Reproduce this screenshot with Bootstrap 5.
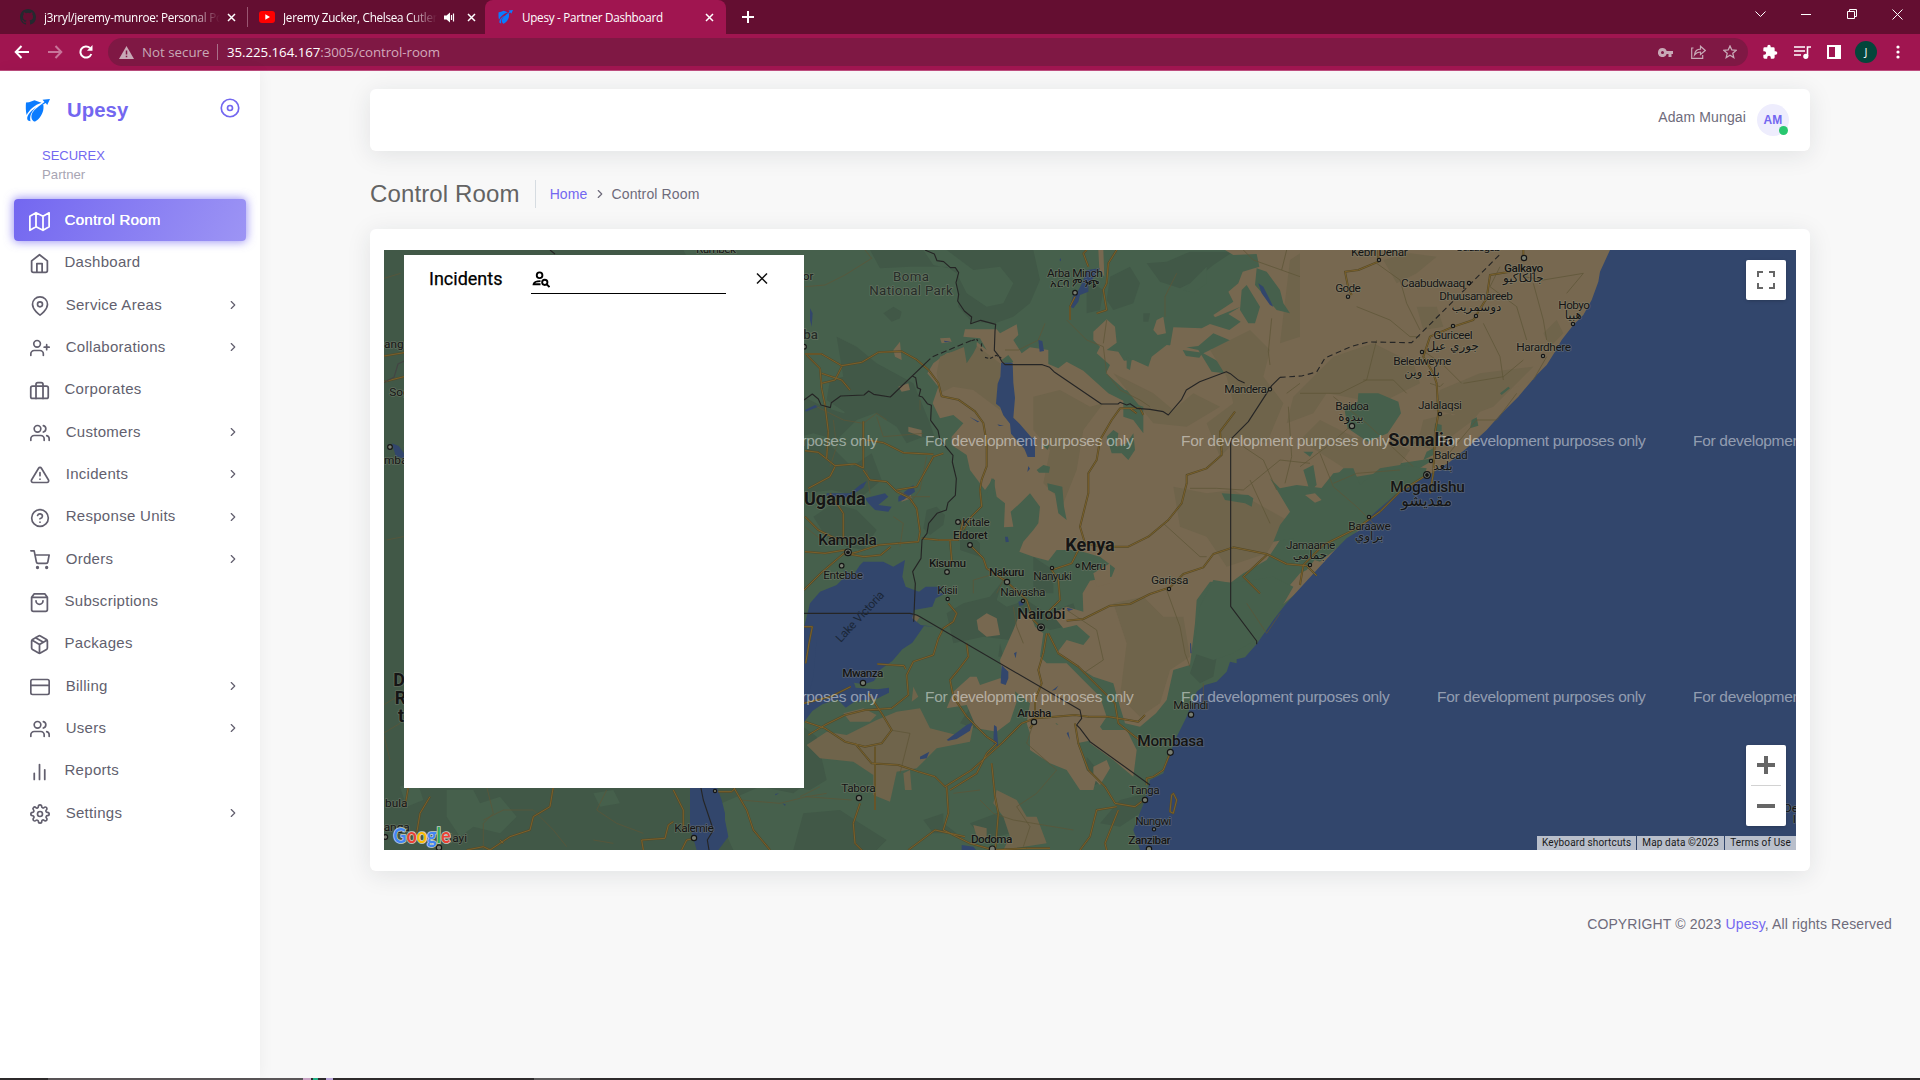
<!DOCTYPE html>
<html lang="en">
<head>
<meta charset="utf-8">
<title>Upesy - Partner Dashboard</title>
<link href="https://cdn.jsdelivr.net/npm/bootstrap@5.3.0/dist/css/bootstrap.min.css" rel="stylesheet">
<script src="https://cdn.jsdelivr.net/npm/bootstrap@5.3.0/dist/js/bootstrap.bundle.min.js"></script>
<style>
  body{font-family:"Liberation Sans",Arial,sans-serif;font-size:14px;letter-spacing:.13px;color:#6e6b7b;background:#f8f8f8;height:1080px;overflow:hidden;line-height:20px}
  a{color:#7367f0;text-decoration:none}
  svg{display:block;flex:none;letter-spacing:0}
  .ic{fill:none;stroke:currentColor;stroke-width:2;stroke-linecap:round;stroke-linejoin:round}
  /* browser chrome */
  .win-frame{font-family:"Open Sans","Noto Sans",sans-serif;color:#fff;letter-spacing:0}
  .tab-strip{height:34px;background:#640e31;font-size:11.7px;letter-spacing:-.28px}
  .tab-item{height:34px}
  .tab-one{width:247px;padding-left:20px}
  .tab-two{width:238px;padding-left:11px;border-left:1px solid #9a5672;height:20px}
  .tab-active{width:241px;background:#a01550;border-radius:8px 8px 0 0;padding-left:13px}
  .tab-title{overflow:hidden;white-space:nowrap}
  .tab-fade{-webkit-mask-image:linear-gradient(90deg,#000 82%,transparent);mask-image:linear-gradient(90deg,#000 82%,transparent)}
  .win-btns{margin-bottom:6px;gap:35.5px;padding-right:17px}
  .tool-strip{height:37px;background:#a01550;border-bottom:1px solid #bd4d7e;font-size:13.3px}
  .omni{height:28px;border-radius:14px;background:#7f1844;margin-left:13px;width:1640px;color:#d3a9bb}
  .omni .vline{width:1px;height:16px;background:#a9708a}
  .avatar-j{width:22px;height:22px;background:#04463b;font-size:11px}
  .task-edge{height:2px;background:linear-gradient(90deg,#2e2b2c 48px,#5a5658 48px 303px,#c9a3c4 303px 311px,#2e2b2c 311px 313px,#1fae83 313px 318px,#2e2b2c 318px 326px,#b9a5d8 326px 333px,#2e2b2c 333px 534px,#5c5a5b 534px 580px,#2e2b2c 580px)}
  /* side menu */
  .shell{height:1007px}
  .side{width:260px;background:#fff;box-shadow:0 0 15px 0 rgba(34,41,47,.05);position:relative;z-index:1}
  .brand{height:60px;margin-top:9px;padding:0 21px 0 25px}
  .brand-name{font-size:20.3px;font-weight:700;color:#7367f0;letter-spacing:.1px;margin-left:17px}
  .org{padding:6px 0 0 42px;height:59px;line-height:19px;letter-spacing:0}
  .org a{font-size:13px}
  .org small{color:#a8a5b3;font-size:13.2px}
  .menu a{height:42.35px;color:#625f6e;font-size:15px;letter-spacing:.29px;padding:0 20px 2px 30px}
  .menu a span{line-height:20px;margin-left:15.700px}
  .menu a .ic{margin-top:3px}
  .menu a .chev{margin-top:1px}
  .menu a.leaf{padding-left:28.5px}
  .menu a.leaf span{margin-left:15px}
  .menu a.leaf .ic{width:21px;height:21px}
  .menu a.now{height:42px;margin:0 14px 1px;padding-left:14.5px;padding-bottom:0;color:#fff;border-radius:4px;background:linear-gradient(118deg,#7367f0,rgba(115,103,240,.7));box-shadow:0 0 10px 1px rgba(115,103,240,.7);text-shadow:.35px 0 0 #fff}
  /* page */
  .page-col{width:1440px}
  .panel-card{background:#fff;border-radius:6px;box-shadow:0 4px 24px 0 rgba(34,41,47,.1)}
  .top-card{height:62px;margin-top:18px;padding:0 21px}
  .who-name{margin-bottom:7px;margin-right:11px}
  .who{width:32px;height:32px;background:#eeedfd;color:#7367f0;font-weight:700;font-size:12px;position:relative}
  .who i{position:absolute;right:1px;bottom:1px;width:9px;height:9px;border-radius:50%;background:#28c76f}
  .crumbs{height:78px;padding-top:8px}
  .crumbs h2{font-size:24px;color:#636363;font-weight:400;line-height:28px;border-right:1px solid #d6dce1;padding-right:15px;margin-right:14px}
  .crumbs .ic{margin:0 5px}
  .map-card{padding:21px 14px}
  .map-box{height:600px;position:relative;overflow:hidden}
  .incidents{position:absolute;left:20px;top:5px;width:400px;height:533px;background:#fff;color:#000;padding:12px 36px 0 25px}
  .incidents h5{font-family:Roboto,sans-serif;font-size:18px;letter-spacing:0;font-weight:400;line-height:24px;width:102px;-webkit-text-stroke:.25px #000}
  .find{width:195px;height:27px;border-bottom:1px solid #000;padding:4px 0 0 0}
  .ctl{position:absolute;right:10px;width:40px;background:#fff;border-radius:2px;box-shadow:0 1px 4px -1px rgba(0,0,0,.3)}
  .full{top:10px;height:40px}
  .zooms{bottom:24px;height:81px}
  .zooms hr{width:30px;margin:0;border-color:#d2d2d2;opacity:1}
  .legal{position:absolute;right:0;bottom:0;font-family:Roboto,sans-serif;font-size:10px;line-height:14px;letter-spacing:.14px;gap:1px;color:#1a1a1a}
  .legal span{background:#b9bfcb;padding:0 5px}
  .foot{padding:43px 28px 0 0}
  /* map drawing */
  .tan{fill:#776850}.tan2{fill:#6f644b}.grn{fill:#46604c}.drk{fill:#415847}.wat{fill:#32466c}
  .road{fill:none;stroke:#544a28;stroke-width:6;stroke-linejoin:round}
  .road2{fill:none;stroke:#7b602b;stroke-width:3;stroke-linejoin:round}
  .trk{fill:none;stroke:#5d5537;stroke-width:2.2;stroke-linejoin:round}
  .bord{fill:none;stroke:#252525;stroke-width:3.4;stroke-linejoin:round}
  .lab{font-family:Roboto,"Noto Sans",sans-serif;font-size:35.500px;fill:#151515;paint-order:stroke;stroke:rgba(140,140,125,.4);stroke-width:5px;stroke-linejoin:round}
  .lab .b{font-weight:500}
  .lab .park{font-size:40px;fill:#272d29}
  .lab .city{font-size:46px;font-weight:500}
  .lab .country{font-size:54px;font-weight:700}
  .lab .lake{fill:#1b2638;stroke:none}
  .lab .ar{font-family:"DejaVu Sans","Noto Sans",sans-serif;font-size:36px;text-anchor:middle}
  .lab .ar-lg{font-size:47px}
  .wm{font-family:"Liberation Sans",Arial,sans-serif;font-size:46.500px;fill:rgba(255,255,255,.48)}
  .dot circle{fill:#777c70;stroke:#151515;stroke-width:3.4}
  .dot .pit{fill:#151515}
</style>
</head>
<body>
<svg width="0" height="0" class="position-absolute">
  <defs>
    <symbol id="i-chev" viewBox="0 0 24 24"><path d="M9 18l6-6-6-6"/></symbol>
    <symbol id="i-close" viewBox="0 0 9 9"><path d="M1 1l7 7M8 1L1 8" stroke="#fff" stroke-width="1.500"/></symbol>
    <symbol id="i-users" viewBox="0 0 24 24"><path d="M17 21v-2a4 4 0 0 0-4-4H5a4 4 0 0 0-4 4v2M23 21v-2a4 4 0 0 0-3-3.87M16 3.13a4 4 0 0 1 0 7.75"/><circle cx="9" cy="7" r="4"/></symbol>
    <symbol id="i-upesy" viewBox="0 0 25 23"><path fill="#0a7cff" d="M1 3.500 4 3.300 9.500 1.200 15 3.300l1.500.4C9.500 6 4.500 10.500 1.600 16 .6 12 .7 7 1 3.500zM18.300 5.500c.9 5.500-1 10.500-4.800 14.500-1.500 1.500-3 2.600-4.500 2.600-2.500-1.600-3.500-5-1.500-9 2.300-3.800 6-6.600 10.800-8.100zM3 21.500c-2.500-3 1-8.500 8.500-13.500C7.500 11.800 4 16 5.500 22.300zM17.500.700 25 0l-2.800 6-1.400-2-8.300 4.200 7-5.300z"/></symbol>
    <g id="roads">
      <path d="M15,342l50,0 60,35 60,-10 50,-30 70,-3 45,25 35,30 30,40 10,40 50,10 50,35 25,35 10,60 0,70-15,40-5,30 5,50-30,30-25,40M20,345l40,40 5,60 10,50 10,80-5,80M15,632l40,5 50,40 60,-5 25,12 0,-140M105,680l-15,30-65,35M190,690l20,30 50,5 30,30 40,20 20,30 10,70-5,30-60,5-60,5-60,20-40,10M290,750l60,-10 50,-90 30,-10M200,600l50,8 60,30 90,5M15,830l40,40 60,30M90,760l40,60 0,80M65,400l60,20 25,30M125,380l-20,40-40,10M365,895l50,5 60,0 15,-60"/>
      <path d="M860,30l-10,10 15,40M950,30l-25,40-5,60-10,20 10,60-30,10M810,240l0,-40 15,-30M1030,525l-10,-20-60,0-25,35-35,60-10,60-25,40 0,60-25,100 15,50 50,10 80,0 60,-30 60,-50 40,-50 15,-60 0,-25 60,-20 45,-40 0,-10-5,-60 30,-40 15,-20M990,505l20,15"/>
      <path d="M1735,30l0,35-60,25-40,5 10,50 10,20M2170,30l0,20M2130,95l-60,10-10,70-25,40-15,25-60,20-70,30-20,60 30,50 10,30 5,90-10,60-5,120-10,60M1880,705l-80,50-60,60-70,50-100,50-60,60-10,60"/>
      <path d="M12,1050l50,-50 70,-60 60,10 50,-5 30,-25M15,935l60,5 60,-10M450,900l5,60-10,20M510,915l40,40 10,30 60,40 60,55 20,60 30,30M445,1090l25,30-10,25-30,20-15,30-15,50-60,20-20,40 5,60-50,40-80,5-60,15-60,30-50,30M232,1272l80,5 5,10M740,1140l10,-10M800,1142l50,-5 80,-40 60,-5 60,-30 60,-20 40,-40 60,-20 30,-40 60,-20 100,20 60,30 60,5 30,30M1400,945l-70,65 50,50M745,1180l30,60 60,40 60,60 50,50 10,60 50,40 40,30M740,1180l-10,60-15,50 10,40-20,50 0,60M500,1210l5,40-30,40-25,30 10,50 40,60 60,60 30,20M15,1445l60,20 60,40 60,15 50,-10 30,-40-30,-50-40,-60M165,1510l50,60 80,5 60,20 50,15 30,30 80,-50 90,-80 60,-60 40,-15 60,-5 60,-5 40,5 60,0 60,10 30,5 20,-20M225,1520l0,190M700,1450l-10,15M825,1450l10,60 30,80 50,50 30,50 60,10 20,-15M950,1700l-60,10-20,80-30,40M955,1710l-40,100 5,20M575,1570l10,100 10,50-10,120M440,1640l5,80-15,50 80,40 70,20 100,-5 70,0M450,1650l80,-50 30,-60 30,-30M325,1830l80,-60 90,20M180,1690l-20,60 5,60 30,30M1110,1540l-20,50-30,20-20,5 0,20M1120,1660l10,20-10,40-10,-5 5,-50zM740,1120l40,-40-5,-60-20,-30 60,-20 20,-40M12,1160l25,0-10,50-10,60"/>
      <path d="M-1248,348l90,-15M-1248,425l60,-15M-740,1640l-10,60-50,30-10,40-60,20-60,40-20,-10-50,10M-900,1800l10,10M-1110,1670l-30,50-10,60-50,20M-1175,1640l-10,60M-380,1650l30,60 0,60M-200,1640l40,70 20,60 50,60M-470,1830l-5,-30 70,-5 10,-40 15,-10M-355,1830l15,-30 25,-5M12,1390l80,-20 60,-30M-245,1655l40,0 10,-10"/>
    </g>
  </defs>
</svg>

<header class="win-frame">
  <div class="tab-strip d-flex align-items-center">
    <div class="tab-item tab-one d-flex align-items-center">
      <svg width="16" height="16" viewBox="0 0 16 16" fill="#24292f"><path d="M8 0C3.580 0 0 3.580 0 8c0 3.540 2.290 6.530 5.470 7.590.4.070.55-.17.55-.38v-1.490c-2.010.37-2.530-.49-2.690-.94-.09-.23-.48-.94-.82-1.130-.28-.15-.68-.52-.01-.53.63-.01 1.080.58 1.230.82.72 1.210 1.870.87 2.330.66.07-.52.28-.87.51-1.070-1.780-.2-3.640-.89-3.640-3.950 0-.87.31-1.590.82-2.150-.08-.2-.36-1.020.08-2.120 0 0 .67-.21 2.200.82a7.600 7.600 0 0 1 4 0c1.530-1.040 2.200-.82 2.200-.82.44 1.100.16 1.920.08 2.120.51.56.82 1.270.82 2.150 0 3.070-1.870 3.750-3.650 3.950.29.25.54.73.54 1.480v2.200c0 .21.15.46.55.38A8 8 0 0 0 16 8c0-4.420-3.580-8-8-8z"/></svg>
      <div class="tab-title tab-fade" style="width:176px;margin-left:8px">j3rryl/jeremy-munroe: Personal Portfolio</div>
      <svg style="margin-left:7px" width="9" height="9"><use href="#i-close"/></svg>
    </div>
    <div class="tab-two d-flex align-items-center">
      <svg width="16" height="12" viewBox="0 0 16 12"><rect width="16" height="12" rx="3" fill="#f00"/><path d="M6.300 3.300v5.400L11 6z" fill="#fff"/></svg>
      <div class="tab-title tab-fade" style="width:154px;margin-left:8px">Jeremy Zucker, Chelsea Cutler - you were good</div>
      <svg style="margin-left:7px" width="11" height="11" viewBox="0 0 11 11"><path d="M0 3.500h2.500L6 .5v10L2.500 7.500H0z" fill="#fff"/><path d="M7.500 3v5M9.500 1.500v8" stroke="#fff" stroke-width="1.200"/></svg>
      <svg style="margin-left:12px" width="9" height="9"><use href="#i-close"/></svg>
    </div>
    <div class="tab-item tab-active d-flex align-items-center">
      <svg width="15" height="14"><use href="#i-upesy"/></svg>
      <div class="tab-title" style="width:175px;margin-left:9px">Upesy - Partner Dashboard</div>
      <svg style="margin-left:8px" width="9" height="9"><use href="#i-close"/></svg>
    </div>
    <svg style="margin-left:16px" width="12" height="12" viewBox="0 0 12 12" stroke="#fff" stroke-width="2"><path d="M6 0v12M0 6h12"/></svg>
    <div class="win-btns ms-auto d-flex align-items-center">
      <svg width="11" height="7" viewBox="0 0 11 7" fill="none" stroke="#fff"><path d="M.5.5l5 5 5-5"/></svg>
      <svg width="10" height="10" viewBox="0 0 10 10" stroke="#fff"><path d="M0 5.500h10"/></svg>
      <svg width="10" height="10" viewBox="0 0 10 10" fill="none" stroke="#fff"><path d="M.5 2.500h7v7h-7zM2.500 2.500v-2h7v7h-2"/></svg>
      <svg width="11" height="11" viewBox="0 0 11 11" stroke="#fff"><path d="M.5.5l10 10M10.500.5l-10 10"/></svg>
    </div>
  </div>
  <div class="tool-strip d-flex align-items-center">
    <svg style="margin-left:14px" width="16" height="14" viewBox="0 0 16 14" fill="none" stroke="#fff" stroke-width="2"><path d="M15 7H2M7.500 1L1.700 7l5.800 6"/></svg>
    <svg style="margin-left:17px" width="16" height="14" viewBox="0 0 16 14" fill="none" stroke="#c8759a" stroke-width="2"><path d="M1 7h13M8.500 1l5.800 6-5.800 6"/></svg>
    <svg style="margin-left:16px" width="14" height="14" viewBox="0 0 14 14" fill="none" stroke="#fff" stroke-width="2"><path d="M12.300 9A5.600 5.600 0 1 1 11 3"/><path d="M13.500 0v5.700H8z" fill="#fff" stroke="none"/></svg>
    <div class="omni d-flex align-items-center" style="margin-left:15px">
      <svg style="margin-left:11px" width="15" height="13" viewBox="0 0 15 13"><path d="M7.500 0L15 13H0z" fill="#c8a9b6"/><path d="M7.500 4.500v4M7.500 9.700v1.600" stroke="#7f1844" stroke-width="1.500"/></svg>
      <span style="margin-left:8px;width:75px;color:#c8a9b6">Not secure</span>
      <span class="vline"></span>
      <span style="margin-left:9px;letter-spacing:-.06px"><span class="text-white">35.225.164.167</span>:3005/control-room</span>
      <div class="ms-auto d-flex align-items-center" style="gap:17.500px;margin-right:11px">
        <svg width="15" height="9" viewBox="0 0 15 9"><path fill="#c8a9b6" fill-rule="evenodd" d="M4.500 0a4.500 4.500 0 0 1 4.200 3H15v3h-1.500v3h-3V6H8.700A4.500 4.500 0 1 1 4.500 0zm0 3a1.500 1.500 0 1 0 0 3 1.500 1.500 0 0 0 0-3z"/></svg>
        <svg width="15" height="14" viewBox="0 0 15 14" fill="none" stroke="#c8a9b6" stroke-width="1.200"><path d="M2.500 3H.7v10.300h11V10M3.500 10c.5-4 3-5.800 6-5.800V1.200l4.800 4.300-4.800 4V7C7 7 5 8 3.500 10z"/></svg>
        <svg width="14" height="14" viewBox="0 0 14 14" fill="none" stroke="#c8a9b6" stroke-width="1.300"><path d="M7 1l1.800 4 4.300.4-3.300 2.900 1 4.300L7 10.300l-3.800 2.300 1-4.300L.9 5.400 5.200 5z"/></svg>
      </div>
    </div>
    <svg style="margin-left:14px" width="16" height="16" viewBox="0 0 24 24" fill="#fff"><path d="M20.500 11H19V7a2 2 0 0 0-2-2h-4V3.500a2.500 2.500 0 0 0-5 0V5H4a2 2 0 0 0-2 2v3.800h1.500a2.700 2.700 0 0 1 0 5.400H2V20a2 2 0 0 0 2 2h3.800v-1.500a2.700 2.700 0 0 1 5.400 0V22H17a2 2 0 0 0 2-2v-4h1.500a2.500 2.500 0 0 0 0-5z"/></svg>
    <svg style="margin-left:16px" width="17" height="13" viewBox="0 0 17 13" fill="none" stroke="#fff" stroke-width="1.600"><path d="M0 1h11M0 5h11M0 9h7M13.500 10V1H17"/><circle cx="11.800" cy="10.300" r="1.800" fill="#fff"/></svg>
    <svg style="margin-left:16px" width="14" height="14" viewBox="0 0 14 14"><path fill="#fff" fill-rule="evenodd" d="M0 0h14v14H0zM2 2v10h6V2z"/></svg>
    <div class="avatar-j rounded-circle d-flex align-items-center justify-content-center" style="margin-left:14px">J</div>
    <svg style="margin-left:19px" width="4" height="14" viewBox="0 0 4 14" fill="#fff"><circle cx="2" cy="2" r="1.600"/><circle cx="2" cy="7" r="1.600"/><circle cx="2" cy="12" r="1.600"/></svg>
  </div>
</header>

<div class="shell d-flex">
  <aside class="side d-flex flex-column flex-shrink-0">
    <div class="brand d-flex align-items-center">
      <svg width="25" height="23"><use href="#i-upesy"/></svg>
      <span class="brand-name">Upesy</span>
      <svg class="ic ms-auto mb-1" style="color:#7367f0;margin-right:-1px" width="20" height="20" viewBox="0 0 24 24"><circle cx="12" cy="12" r="10.500"/><circle cx="12" cy="12" r="3"/></svg>
    </div>
    <div class="org d-flex flex-column"><a href="#">SECUREX</a><small>Partner</small></div>
    <nav class="menu nav flex-column flex-nowrap">
      <a class="leaf now d-flex align-items-center" href="#"><svg class="ic" viewBox="0 0 24 24"><path d="M1 6v16l7-4 8 4 7-4V2l-7 4-8-4zM8 2v16M16 6v16"/></svg><span>Control Room</span></a>
      <a class="leaf d-flex align-items-center" href="#"><svg class="ic" viewBox="0 0 24 24"><path d="M3 9l9-7 9 7v11a2 2 0 0 1-2 2H5a2 2 0 0 1-2-2zM9 22V12h6v10"/></svg><span>Dashboard</span></a>
      <a class="d-flex align-items-center" href="#"><svg class="ic" width="20" height="20" viewBox="0 0 24 24"><path d="M21 10c0 7-9 13-9 13s-9-6-9-13a9 9 0 0 1 18 0z"/><circle cx="12" cy="10" r="3"/></svg><span>Service Areas</span><svg class="ic chev ms-auto" width="14" height="14"><use href="#i-chev"/></svg></a>
      <a class="d-flex align-items-center" href="#"><svg class="ic" width="20" height="20" viewBox="0 0 24 24"><path d="M16 21v-2a4 4 0 0 0-4-4H5a4 4 0 0 0-4 4v2M20 8v6M23 11h-6"/><circle cx="8.500" cy="7" r="4"/></svg><span>Collaborations</span><svg class="ic chev ms-auto" width="14" height="14"><use href="#i-chev"/></svg></a>
      <a class="leaf d-flex align-items-center" href="#"><svg class="ic" viewBox="0 0 24 24"><rect x="2" y="7" width="20" height="14" rx="2"/><path d="M16 21V5a2 2 0 0 0-2-2h-4a2 2 0 0 0-2 2v16"/></svg><span>Corporates</span></a>
      <a class="d-flex align-items-center" href="#"><svg class="ic" width="20" height="20"><use href="#i-users"/></svg><span>Customers</span><svg class="ic chev ms-auto" width="14" height="14"><use href="#i-chev"/></svg></a>
      <a class="d-flex align-items-center" href="#"><svg class="ic" width="20" height="20" viewBox="0 0 24 24"><path d="M10.290 3.860L1.820 18a2 2 0 0 0 1.710 3h16.940a2 2 0 0 0 1.710-3L13.710 3.860a2 2 0 0 0-3.420 0zM12 9v4M12 17h.01"/></svg><span>Incidents</span><svg class="ic chev ms-auto" width="14" height="14"><use href="#i-chev"/></svg></a>
      <a class="d-flex align-items-center" href="#"><svg class="ic" width="20" height="20" viewBox="0 0 24 24"><circle cx="12" cy="12" r="10"/><path d="M9.090 9a3 3 0 0 1 5.830 1c0 2-3 3-3 3M12 17h.01"/></svg><span>Response Units</span><svg class="ic chev ms-auto" width="14" height="14"><use href="#i-chev"/></svg></a>
      <a class="d-flex align-items-center" href="#"><svg class="ic" width="20" height="20" viewBox="0 0 24 24"><circle cx="9" cy="21" r="1"/><circle cx="20" cy="21" r="1"/><path d="M1 1h4l2.680 13.390a2 2 0 0 0 2 1.610h9.720a2 2 0 0 0 2-1.610L23 6H6"/></svg><span>Orders</span><svg class="ic chev ms-auto" width="14" height="14"><use href="#i-chev"/></svg></a>
      <a class="leaf d-flex align-items-center" href="#"><svg class="ic" viewBox="0 0 24 24"><path d="M6 2L3 6v14a2 2 0 0 0 2 2h14a2 2 0 0 0 2-2V6l-3-4zM3 6h18M16 10a4 4 0 0 1-8 0"/></svg><span>Subscriptions</span></a>
      <a class="leaf d-flex align-items-center" href="#"><svg class="ic" viewBox="0 0 24 24"><path d="M16.500 9.400l-9-5.190M21 16V8a2 2 0 0 0-1-1.730l-7-4a2 2 0 0 0-2 0l-7 4A2 2 0 0 0 3 8v8a2 2 0 0 0 1 1.730l7 4a2 2 0 0 0 2 0l7-4A2 2 0 0 0 21 16zM3.270 6.960L12 12.010l8.730-5.050M12 22.080V12"/></svg><span>Packages</span></a>
      <a class="d-flex align-items-center" href="#"><svg class="ic" width="20" height="20" viewBox="0 0 24 24"><rect x="1" y="3" width="22" height="18" rx="2"/><path d="M1 10h22"/></svg><span>Billing</span><svg class="ic chev ms-auto" width="14" height="14"><use href="#i-chev"/></svg></a>
      <a class="d-flex align-items-center" href="#"><svg class="ic" width="20" height="20"><use href="#i-users"/></svg><span>Users</span><svg class="ic chev ms-auto" width="14" height="14"><use href="#i-chev"/></svg></a>
      <a class="leaf d-flex align-items-center" href="#"><svg class="ic" viewBox="0 0 24 24"><path d="M18 21V10M12 21V4M6 21v-7"/></svg><span>Reports</span></a>
      <a class="d-flex align-items-center" href="#"><svg class="ic" width="20" height="20" viewBox="0 0 24 24"><circle cx="12" cy="12" r="3"/><path d="M19.400 15a1.650 1.650 0 0 0 .33 1.820l.06.060a2 2 0 1 1-2.830 2.830l-.06-.06a1.650 1.650 0 0 0-2.800 1.170V21a2 2 0 0 1-4 0v-.09A1.650 1.650 0 0 0 9 19.400a1.650 1.650 0 0 0-1.820.33l-.06.06a2 2 0 1 1-2.830-2.830l.06-.06a1.650 1.650 0 0 0-1.170-2.800H3a2 2 0 0 1 0-4h.09A1.650 1.650 0 0 0 4.600 9a1.650 1.650 0 0 0-.33-1.820l-.06-.06a2 2 0 1 1 2.830-2.830l.06.06A1.650 1.650 0 0 0 9 4.680 1.650 1.650 0 0 0 10 3.170V3a2 2 0 0 1 4 0v.09a1.650 1.650 0 0 0 2.820 1.170l.06-.06a2 2 0 1 1 2.830 2.830l-.06.06A1.650 1.650 0 0 0 20.830 10H21a2 2 0 0 1 0 4h-.09a1.650 1.650 0 0 0-1.510 1z"/></svg><span>Settings</span><svg class="ic chev ms-auto" width="14" height="14"><use href="#i-chev"/></svg></a>
    </nav>
  </aside>

  <main class="flex-grow-1 d-flex flex-column align-items-center">
    <div class="page-col">
      <div class="panel-card top-card d-flex align-items-center justify-content-end">
        <span class="who-name">Adam Mungai</span>
        <span class="who rounded-circle d-flex align-items-center justify-content-center">AM<i></i></span>
      </div>
      <div class="crumbs d-flex align-items-center">
        <h2 class="mb-0">Control Room</h2>
        <a href="#">Home</a>
        <svg class="ic" width="14" height="14"><use href="#i-chev"/></svg>
        <span>Control Room</span>
      </div>
      <section class="panel-card map-card">
        <div class="map-box">
          <svg width="1412" height="600" viewBox="-1248 30 4236 1800">
            <rect x="-1248" y="30" width="4236" height="1800" class="grn"/>
            <!-- darker forest -->
            <g class="drk">
              <path d="M-1248,30H-350L-300,120-200,300-60,420-40,900 0,1300-40,1500 60,1600-20,1660-120,1640-260,1700-200,1830H-1248z"/>
              <path d="M210,30H370L400,75 470,90 475,200 515,245 585,250 640,230 690,190 720,120 700,30H440L520,90 600,80 640,130 610,190 560,200 500,160 470,100 440,80 330,80 240,85z"/>
              <path d="M250,220l30-20 25,15-5,20-25,10zM110,290l60,30 60,50 110,60 50,120 20,60-40-20-50,20-30-50-80-50-70,10-60-40 10-60 40-10zM10,470l60,30 60,20 80-40 40,30-80,30-60,60-70-20-40,10zM15,600l80,20 60,60 60-40 30,80-60,50-90-20-80,10zM380,810l30-10 25,25-5,30-40,30-20-20zM40,830l60-40 70,20 60,60-40,60-100-20z"/>
              <path d="M930,110l60-30 30,50-20,60-60,20-20-30zM1040,70l60-5 70-30h130l-60,40-60,50-40,20-60-20zM860,120l50,30-10,60-40,10zM1030,220l20,0-5,25-15,0z"/>
              <path d="M440,1120l50-30 80-20 40-50-20,60 30,20 60-20 60,40 80-30 20,60-90,20-60-30-60,60-80-10-90,20zM530,1370l50,20 20,50-60,30-60-20zM770,1390l40-20 40,30-30,40-50,0zM860,1550l25,30 10,50-20,10-15-40zM10,1460l40,30 30,130-50,30-70-10zM10,1720l110-10 60,40 80,50-30,30H-20zM370,1740l60-20 0,30 40,30-70,0zM510,1750l80-30 60,20-20,40-80,20zM960,1680l80-20-20,60-60,40-60-10zM600,1210l10,40-15,0zM500,1420l90-30 20,40-70,40z"/>
              <path d="M1190,1240l60,10-10,60-40,20-30-30zM1275,1215l80-45 40-60 30-30-40,90-60,50-50,20zM480,850l60,60 0,40-60-20zM700,950l60,40 0,70-60,0z"/>
            </g>
            <path class="grn" d="M-1060,1650l80,0 20,40 60,-20 50,60-50,50-80-20-40,30-40-60zM-1200,1640l50-20 20,60-50,20zM-620,1660l60,-10 20,40-60,10zM-1180,550l50,20-10,60-50-10z"/>
            <!-- dry land -->
            <path class="tan" d="M1275,30 1300,45 1370,42 1378,80 1328,95 1315,130 1285,155 1300,185 1240,225 1245,232 1322,200 1285,222 1322,245 1288,270 1230,252 1205,265 1120,262 1110,320 1140,325 1195,318 1240,280 1300,305 1275,345 1235,328 1210,340 1265,370 1275,400 1235,395 1195,330 1150,320 1100,315 1055,350 1045,380 1000,360 972,362 955,335 920,330 950,308 945,260 920,238 880,275 880,300 900,320 890,340 930,375 918,400 975,450 1030,460 1035,510 985,490 925,460 850,392 800,365 775,385 745,372 745,330 690,322 665,340 640,300 655,285 650,253 600,280 590,268 495,268 490,290 540,295 560,330 530,305 505,370 495,330 440,340 400,370 382,400 415,440 398,490 420,535 460,525 490,550 455,590 455,615 500,645 510,690 555,750 580,715 590,770 615,790 612,862 640,860 632,815 660,790 690,760 720,800 715,850 700,870 670,905 658,935 700,950 745,962 770,930 830,930 900,950 945,985 935,1010 870,1022 848,1060 850,1115 800,1100 755,1122 790,1165 830,1155 870,1190 850,1215 800,1200 770,1240 880,1310 940,1330 960,1400 975,1450 1020,1460 1068,1420 1100,1380 1120,1290 1170,1275 1185,1150 1190,1080 1230,1025 1292,1028 1330,1000 1400,960 1440,900 1480,850 1600,700 2000,640 2440,400 2440,30z"/>
            <path class="tan" d="M1440,1070 1500,1000 1520,990 1560,940 1605,880 1660,850 1720,790 1780,730 1850,690 1900,660 2000,560 2050,480 2200,420 2080,600 1960,680 1500,1050 1440,1100z"/>
            <path class="tan" d="M530,1140l30-20 30,15 10,50-40,5-25-20zM660,1120l30,0 15,40 25,20-10,70 20,20 60,0 40,40 60,60 20,60-20,30 30,40 20,60-70-60-50,10-60-60-40,20-30,40-20-60 10-60-50-40-20,60-30-20-10-50 30-20-10-60 40-90zM510,1310l20,0 10,25 60-20 40,10 10,60-20,60-40,30-60-10-30-70-60,10 20-50zM870,1470l110,0 30,60-10,80-60-50-70-50zM690,1480l70-30 60,20 20,60 20,60 30,20-10,40-40,0-40-60-50-20-60-40zM880,1580l40-20 10,25-30,50-20-20z"/>
            <path class="tan2" d="M230,1440l60-25 70,-10 30,60 80,20 50,-30 -10,50-100,20-60,60-60,10-20,90-50,-20 0,-60-60-40-100-10-40-40 60-40 60,10zM590,1650l60,30 30,50 30,0 30,80 -130,20 20,-40-20-60-30-40zM520,1755l40,10 0,30 -30,-5zM130,1420l60,-15 40,20 -20,20-60,0zM340,1340l15,30-20,15zM310,1600l20-10 5,60-20,0zM330,1120l30,10-20,30-40,5z"/>
            <path class="tan" d="M420,295l30-2 5,12-30,5zM280,330l20-25 5,55-20-10zM295,440l30-10 5,20-25,5zM325,560l40,10 0,20-40-15zM895,30h15l3,80-15-20zM1060,270l10-30 20-10 8,50-25,5zM300,760l30,-5 5,20-30,10z"/>
            <!-- muted tones on dry land -->
            <path class="tan2" d="M420,350l100,-40 80,60 0,140-80,-60-60-10-40,20 -10,-60zM700,470l80,-20 90,50 40,-10 -60,80 -20,120-40,100-60-60 20-100-50-60zM1230,330l120,-60 60,60 -20,80 60,80 -50,120 -80,-20 -60,60 -40,-100 80,-60 -20,-80zM940,400l120,60 60,50 60-50 80,40-100,60-100,-10zM1120,740l100,20 80,-10 160,90 -60,100 -120,40 -60,-90 -80,-30zM1290,840l80,-40 60,60-60,60-80,0zM940,1090l90,-20 60,60 60,0 20,120 -60,40-30,100-60,40-60,-60 20,-160zM1470,60l30,-20 0,250-60,20z"/>
            <path class="tan2" d="M1750,60l80,-20 80,10 -60,50-60,30zM1850,200l60,0 20,60-60,10zM1600,350l120,-40 120,60 20,60-120,60-160,-30-40,60-80,30 20,-80zM2040,400l160,-20 -60,60-60,60-80,30-100,-20 20,-60zM1980,520l60,-60 60,-20 -80,100-120,90-60,-20 40,-60zM1500,600l60,-60 100,50 80,0 90,40 -40,60-120,20-60,-40zM2230,280l40,-40 20,40-40,40zM1870,540l80,-20 40,40-80,60-60,0z"/>
            <!-- green pockets -->
            <path class="grn" d="M1370,85l30,10 40,55 10,40 20,30-40,-10-30-35-35-40zM1325,150l15-15 40,65 -15,50 -20,0-25-40zM1148,330l60,8-10,15-40-5zM980,350l15,10-5,30-10-5zM1220,80l0,50-40,30-30-10zM920,590l20-20 15,10-5,40 30,-10 20,-30 5,50-20,30-20-20-30,0zM970,480l60,20 0,80-30,-40-30-10zM710,690l20-15 20,5-3,18-30,0zM742,730l45,10 5,60 8,40-25-20-10-60-20-10zM560,760l15-45 10,5-5,50-15,15zM728,615l20,0-5,15zM490,310l10,60 20,-30 10,-20 0,-15zM605,360l20-15 15,20-20,10zM1410,715l30,30 50,-10 80,10 60,-60 30,0 20,50 60,-50 60,-10 80,10-20,70-80,20-120,110-100,80-60,-20-20-50-60,10 20-50 30-40zM1265,760l80,5 15,10-5,25-20-10-60-10zM1240,1020l60,10 120,-20 60,30-80,140-100,60-60,20-60,-20 20,-140z"/>
            <path class="grn" d="M1675,460l60,0 60,25 8,35-40,60-60,25-60-40-10-60 40-20zM1905,550l20,5 0,20-22,-2zM2015,540l15-8 5,25-25,8zM2100,460l25-20 5,5-25,20zM1880,635l20,-10 0,20-30,15zM1510,635l30,0-10,15zM1510,690l30-15 10,60-20,20z"/>
            <path class="tan" d="M1515,765l30-5 20,20-20,8zM880,1000l50,-30 0,60-40,10z"/>
            <!-- ocean and lakes -->
            <path class="wat" d="M2430,30 2400,95 2395,125 2375,180 2350,225 2320,255 2285,300 2265,335 2240,375 2210,405 2155,470 2100,525 2060,570 2000,625 1950,665 1895,700 1835,735 1785,765 1710,830 1680,870 1640,895 1605,930 1500,1045 1455,1095 1420,1140 1370,1212 1335,1252 1310,1258 1310,1270 1290,1265 1280,1295 1250,1325 1215,1335 1190,1355 1160,1430 1130,1490 1110,1540 1090,1600 1050,1620 1035,1680 1015,1730 1000,1770 1010,1800 1020,1830H2988V30z"/>
            <g class="wat">
              <path d="M603,368l35,0 2,60 5,45-5,60 20,20 35,40 10,0 0,58-22,0-10-25-40-45-3-30-20-25-10-25-12-10 5-60 8-20zM715,300l12,3 5,30-13,2zM685,678l5,8-8,10zM860,90l40,-5-20,30-15,20 0,20-25,10-5,20-15,20-10,-5 8-30 15-15 15-30zM1375,130l15,10 30,60-10,-5-25-35zM30,205l8,15-3,40-5-20zM15,510l30,-15 10,5-38,15zM508,530l30,15-5,2zM592,553l20,5-15,0zM778,60l5-6 0,10zM432,302l22,3-20,2z"/>
              <path d="M80,760l70,0 30,-25 20,-12-10,20-25,15-25,15-60,-5zM195,775l60,-15 10,10-30,25 40,5-10,15-40,-5-20-20zM295,770l45,-35 5,20-35,25-15,5zM615,890l8,0 4,15-10,2z"/>
              <path d="M30,1090l30,-35 50,-20 30,-30-10,-15 30,15 20,-30 10,-10 60,0 30,15 35,-20-8,50 10,30 40,15 20,-15 50,0 -10,20 40,-10-50,25-10,25-55,10-5,25 25,20 40,5-30,-2-35,50-30,20-30,35-35,25-20,35-30,10-30,-5 5,15 65,5 35,-5 0,15-40,20-60,5-30,20-25,-25-45,15-30,20-30,40 5-60-28-60 18-60-15-30 20-60zM605,1275l20,20 0,20-8,20-15,-5zM440,1500l60,-45 18,-8-8,25-40,25-25,5zM582,1455l8,5 5,60-15-10zM360,1550l28,-15-8,20-20,3zM755,1352l20-15-8,12zM642,1240l8-5-3,20zM800,1480l5,-5 5,25zM655,1085l15,-5 0,15-12,3zM800,1103l20,5-15,5zM1170,1210l3,0 2,30-4,0zM485,1815l35,5 10,12-45,0zM180,1360l-5,30-8-20z"/>
              <path d="M-330,1640H-250L-235,1680-225,1720-225,1740-215,1790-245,1830H-310L-330,1760-330,1720-330,1690z"/>
              <path d="M10,1200l40,0 -10,110 -30,110 -5,20-40,-100 20,-60zM-1224,610l20,8 15,20 6,20-30-10z"/>
              <path d="M-75,1662l12,-2-10,6zM-52,1690l10,4-4,3z"/>
            </g>
            <!-- tracks -->
            <g class="trk">
              <path d="M15,140l60,-5 60,-30 80,-50-20,-25M735,250l-20,50-60,30-40,0M800,240l60,60 50,20 10,80 40,50 60,30 30,20M1130,100l-35,70 0,60M1460,30l-15,60M1500,110l-140,-50-30,-30M1415,235l-10,100 5,40M920,240l-10,70"/>
              <path d="M1170,745l80,0 80,5 110,-90 90,10M1330,620l60,40 40,90M1350,720l60,130M1090,850l110,100 20,0M1500,430l-40,30M1100,1050l40,110 15,80 15,40M1465,500l10,150-20,80M1730,70l70,50 20,70 40,80M1670,200l100,40 60,50 30,0M1500,460l120,0 80,-40 30,-120M1600,470l100,80 140,130M1500,680l80,-60 70,-60M1690,420l90,0 40,40M1930,430l-10,10-30,-10M2100,80l-30,60 80,60 30,100M2170,110l60,10 120,-20-50,60M2200,130l30,110 10,60M2240,350l-40,70M2050,250l50,100 10,70M1985,430l-60,-60-60,-40M2170,360l-60,50-60,10-60,10M2150,460l-60,80-60,0-100,120M1560,640l40,100 70,60 60,60M1800,690l-130,10-70,30"/>
              <path d="M50,500l80,40 60,10 40,-30 30,20M100,540l10,80-20,60M360,480l0,30M230,530l20,60 120,-10M380,650l-20,100-30,40M200,690l10,70M290,750l40,20 60,0M15,860l50,40M280,830l30,20-10,70M520,1060l0,-40 70,-20M640,1100l10,60 20,50M800,1110l90,60 20,90-60,40M700,1450l-20,60 90,80-60,70-60,40M270,1470l60,10-30,120M460,1660l80,-10M540,1680l40,40 60,20 180,30M60,1640l-60,30M670,1820l20,-60-40,-60M620,1000l-30,60M15,1670l140,10M1340,1090l60,90 40,-60M1210,1390l0,-60"/>
              <path d="M-1248,115l50,-15M-1240,900l50,-10 50,30M-1200,1365l-50,30M-1200,1450l-50,30 20,80M-940,1640l20,80-30,30 0,80M-950,1740l60,-30 90,0 60,60 40,50M-580,1650l-30,60 60,40 80,30M-620,1800l60,10M-180,1680l120,10 80,-20 60,-10"/>
            </g>
            <!-- main roads: dark casing, then the lighter core -->
            <use href="#roads" class="road"/>
            <use href="#roads" class="road2"/>
            <!-- borders -->
            <g class="bord">
              <path d="M375,30l28,12 8,20 20,3 20,18 15,0 10,15-8,30 8,35-3,20 20,30 22,18-3,20 30,-10 45,12-2,20-2,58 12,15 10,18 10,10 112,0 22,8 15,15 140,95 50,0 6,-5 20,8 10,-4 20,14 40,3 40,7 15,10 10,-12 30,-35 14,-28 40,-25 80,-30 12,6 25,20 18,8M1440,412l-25,25-70,108-50,50-3,10v494l78,104v10"/>
              <path d="M12,480l25,-18 18,15 8,18 28,8 3,-15 28,-20 70,-3 14,-12 15,10 50,8 120,-115M337,408l10,5 5,30 10,5-5,20 10,3 15,20 12,5-2,45 22,30 5,25 15,20 25,30-2,20 12,50-3,50-22,22-5,22-28,10-25,30-5,30-15,20-3,55-25,40 8,35-5,115M12,1120h318l20,5 10,5 420,245 60,35 5,25-15,20 10,10 30,40 180,130"/>
              <path d="M398,350l90,-38 30,-12" stroke-dasharray="18 9"/>
              <path d="M515,302l15,-5 3,6M545,310l-2,20 6,5M555,352l14,4 20,-10 15,8" stroke-dasharray="10 6"/>
              <path d="M1440,412l65,-4 45,-12 25,-42 80,-35 50,-13 130,2 120,-120 145,-145" stroke-dasharray="17 11"/>
              <path d="M-1248,427l30,-15 12,-40 20,-10 8,-30 16,-20" stroke="#444"/>
              <path d="M-750,30l15,12M-298,1640l8,40 30,90-18,30 5,30"/>
            </g>
            <g class="dot">
              <circle cx="825" cy="158" r="7"/><circle cx="510" cy="915" r="7"/><circle cx="474" cy="846" r="7"/><circle cx="125" cy="977" r="7"/><circle cx="441" cy="996" r="7"/><circle cx="443" cy="1077" r="5"/><circle cx="621" cy="1026" r="8"/><circle cx="669" cy="1083" r="5"/><circle cx="756" cy="984" r="5"/><circle cx="833" cy="977" r="5"/><circle cx="1107" cy="1047" r="5"/><circle cx="189" cy="1329" r="8"/><circle cx="177" cy="1674" r="8"/><circle cx="702" cy="1446" r="8"/><circle cx="1173" cy="1424" r="8"/><circle cx="1111" cy="1537" r="9"/><circle cx="1035" cy="1680" r="8"/><circle cx="1062" cy="1768" r="5"/><circle cx="1047" cy="1827" r="8"/><circle cx="577" cy="1827" r="9"/><circle cx="1410" cy="448" r="5"/>
              <circle cx="1737" cy="60" r="5"/><circle cx="1644" cy="170" r="5"/><circle cx="2172" cy="54" r="8"/><circle cx="2007" cy="129" r="5"/><circle cx="2028" cy="228" r="5"/><circle cx="1959" cy="258" r="5"/><circle cx="1866" cy="336" r="5"/><circle cx="2319" cy="252" r="5"/><circle cx="2229" cy="348" r="5"/><circle cx="1920" cy="522" r="5"/><circle cx="1656" cy="558" r="8"/><circle cx="1893" cy="663" r="5"/><circle cx="1707" cy="831" r="5"/><circle cx="1530" cy="975" r="5"/><circle cx="12" cy="320" r="7"/>
              <circle cx="144" cy="937" r="10"/><circle class="pit" cx="144" cy="937" r="4"/><circle cx="723" cy="1162" r="10"/><circle class="pit" cx="723" cy="1162" r="4"/><circle cx="1881" cy="705" r="10"/><circle class="pit" cx="1881" cy="705" r="4"/>
              <circle cx="-318" cy="1794" r="8"/><circle cx="-1083" cy="1823" r="8"/><circle cx="-1244" cy="1791" r="7"/><circle cx="-255" cy="1653" r="5"/><circle cx="-1230" cy="621" r="7"/>
            </g>
            <g class="lab">
              <text x="279" y="122" textLength="108" class="park">Boma</text><text x="208" y="165" textLength="250" class="park">National Park</text>
              <text x="741" y="111" textLength="167">Arba Minch</text><text x="750" y="142" textLength="148" lengthAdjust="spacingAndGlyphs">አርባ ምንጭ</text>
              <text x="8" y="119">or</text><text x="-312" y="38" textLength="120">Rumbek</text>
              <text x="10" y="298" class="park b">ba</text>
              <text x="12" y="796" textLength="185" class="country">Uganda</text>
              <text x="55" y="915" class="city" textLength="175">Kampala</text>
              <text x="487" y="857" textLength="82">Kitale</text><text x="459" y="896" class="b" textLength="104">Eldoret</text>
              <text x="796" y="934" textLength="148" class="country">Kenya</text>
              <text x="1273" y="459" textLength="128">Mandera</text>
              <text x="70" y="1017" textLength="119">Entebbe</text><text x="387" y="981" class="b" textLength="111">Kisumu</text><text x="412" y="1062" textLength="61">Kisii</text>
              <text x="567" y="1008" class="b" textLength="106">Nakuru</text><text x="700" y="1020" textLength="116">Nanyuki</text><text x="844" y="990" textLength="74">Meru</text><text x="601" y="1068" textLength="135">Naivasha</text><text x="1053" y="1032" textLength="112">Garissa</text>
              <text x="652" y="1138" class="city" textLength="144">Nairobi</text>
              <text transform="translate(122 1209) rotate(-47)" textLength="195" class="lake">Lake Victoria</text>
              <text x="127" y="1311" class="b" textLength="123">Mwanza</text><text x="124" y="1656" textLength="103">Tabora</text><text x="652" y="1431" class="b" textLength="102">Arusha</text><text x="513" y="1809" class="b" textLength="124">Dodoma</text>
              <text x="1120" y="1407" textLength="105">Malindi</text><text x="1012" y="1517" class="city" textLength="200">Mombasa</text><text x="988" y="1662" textLength="91">Tanga</text><text x="1006" y="1755" textLength="108">Nungwi</text><text x="985" y="1811" class="b" textLength="127">Zanzibar</text>
              <text x="1653" y="48" textLength="170">Kebri Dehar</text><text x="1606" y="156" textLength="76">Gode</text><text x="1966" y="34" textLength="136">Geladogob</text><text x="2112" y="96" class="b" textLength="118">Galkayo</text><text x="1803" y="140" textLength="193">Caabudwaaq</text><text x="1918" y="180" textLength="221">Dhuusamareeb</text><text x="2275" y="207" textLength="95">Hobyo</text><text x="1900" y="297" textLength="118">Guriceel</text><text x="2149" y="333" textLength="164">Harardhere</text><text x="1780" y="375" textLength="174">Beledweyne</text><text x="1854" y="507" textLength="132">Jalalaqsi</text><text x="1606" y="510" textLength="101">Baidoa</text><text x="1902" y="657" textLength="101">Balcad</text><text x="1645" y="869" textLength="127">Baraawe</text><text x="1458" y="926" textLength="148">Jamaame</text>
              <text x="1765" y="618" textLength="195" class="country">Somalia</text><text x="1771" y="757" class="city" textLength="223">Mogadishu</text>
              <text class="ar" x="2170" y="127">جالكاكيو</text><text class="ar" x="2029" y="213">دوسمريب</text><text class="ar" x="2320" y="238">هبيا</text><text class="ar" x="1958" y="329">جوري عيل</text><text class="ar" x="1866" y="407">بلد وين</text><text class="ar" x="1653" y="542">بيدوة</text><text class="ar" x="1929" y="689">بلعد</text><text class="ar ar-lg" x="1880" y="798">مقديشو</text><text class="ar" x="1707" y="901">براوي</text><text class="ar" x="1530" y="957">جمامي</text>
              <text x="-1248" y="324">anga</text><text x="-1232" y="467">Sog</text><text x="-1248" y="672">mba</text>
              <text x="-1220" y="1338" class="country">D</text><text x="-1216" y="1392" class="country">R</text><text x="-1206" y="1446" class="country">t</text>
              <text x="-1245" y="1701">bula</text><text x="-1249" y="1773">anga</text><text x="-1052" y="1806">layi</text><text x="-377" y="1776" textLength="118">Kalemie</text><text x="2952" y="1716">Des</text><text x="2978" y="1750">Is</text>
            </g>
            <g class="wm">
              <text x="-393" y="617" textLength="626">For development purposes only</text><text x="375" y="617" textLength="626">For development purposes only</text><text x="1143" y="617" textLength="626">For development purposes only</text><text x="1911" y="617" textLength="626">For development purposes only</text><text x="2679" y="617" textLength="626">For development purposes only</text>
              <text x="-393" y="1385" textLength="626">For development purposes only</text><text x="375" y="1385" textLength="626">For development purposes only</text><text x="1143" y="1385" textLength="626">For development purposes only</text><text x="1911" y="1385" textLength="626">For development purposes only</text><text x="2679" y="1385" textLength="626">For development purposes only</text>
            </g>
            <text x="-1220" y="1808" textLength="172" lengthAdjust="spacingAndGlyphs" font-family="Lato,sans-serif" font-size="60" font-weight="700" paint-order="stroke" stroke="#c5cfc9" stroke-width="5"><tspan fill="#4285f4">G</tspan><tspan fill="#ea4335">o</tspan><tspan fill="#fbbc05">o</tspan><tspan fill="#4285f4">g</tspan><tspan fill="#34a853">l</tspan><tspan fill="#ea4335">e</tspan></text>
          </svg>

          <div class="incidents d-flex align-items-start">
            <h5 class="mb-0">Incidents</h5>
            <div class="find">
              <svg style="margin-left:1px" width="18" height="17" viewBox="0 0 19 18" fill="none" stroke="#000" stroke-width="2"><circle cx="8" cy="4.500" r="3"/><path d="M9 10.700c-4 0-7 1.200-7.300 3.300H9"/><circle cx="13.500" cy="12" r="2.800"/><path d="M15.500 14l3 3"/></svg>
            </div>
            <svg class="ms-auto" style="margin-top:6px" width="12" height="11" viewBox="0 0 12 11" stroke="#111" stroke-width="1.500"><path d="M1 .5l10 10M11 .5l-10 10"/></svg>
          </div>
          <div class="ctl full d-flex align-items-center justify-content-center"><svg width="18" height="18" viewBox="0 0 18 18" fill="#666"><path d="M0 0v6h2V2h4V0zM18 0h-6v2h4v4h2zM0 18h6v-2H2v-4H0zM18 18v-6h-2v4h-4v2z"/></svg></div>
          <div class="ctl zooms d-flex flex-column align-items-center justify-content-between">
            <svg width="40" height="40" viewBox="0 0 40 40" fill="#666"><path d="M11 18h7v-7h4v7h7v4h-7v7h-4v-7h-7z"/></svg>
            <hr>
            <svg width="40" height="40" viewBox="0 0 40 40" fill="#666"><path d="M11 18h18v4H11z"/></svg>
          </div>
          <div class="legal d-flex"><span>Keyboard shortcuts</span><span>Map data ©2023</span><span>Terms of Use</span></div>
        </div>
      </section>
    </div>
    <footer class="foot align-self-end">COPYRIGHT © 2023 <a href="#">Upesy</a>, All rights Reserved</footer>
  </main>
</div>
<div class="task-edge"></div>
</body>
</html>
